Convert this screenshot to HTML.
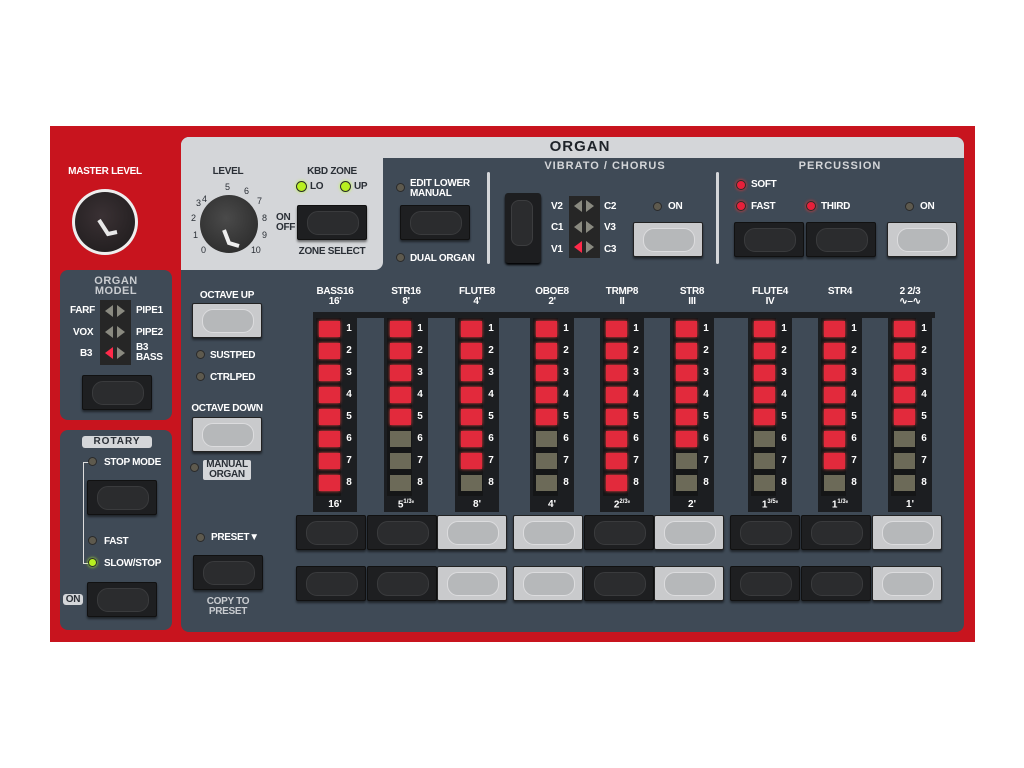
<!DOCTYPE html>
<html><head><meta charset="utf-8">
<style>
*{margin:0;padding:0;box-sizing:border-box}
body{width:1024px;height:768px;background:#fff;position:relative;overflow:hidden;font-family:"Liberation Sans",sans-serif;font-weight:bold;color:#fff}
.a{position:absolute}
.t{position:absolute;font-size:10px;line-height:11px;white-space:nowrap;letter-spacing:-0.3px}
.c{text-align:center}
.dk{color:#2a2f36}
.btn{position:absolute;width:70px;height:35px;border-radius:2px}
.btn.d{background:#1e1f21;border:1px solid #111;box-shadow:0 2px 2px rgba(0,0,0,.5)}
.btn.d::after{content:"";position:absolute;left:9px;top:5px;width:50px;height:22px;border-radius:11px;background:#2b2c2e;border:1px solid #3a3b3d}
.btn.l{background:#c9cacc;border:1px solid #222;box-shadow:0 2px 2px rgba(0,0,0,.5)}
.btn.l::after{content:"";position:absolute;left:9px;top:5px;width:50px;height:22px;border-radius:11px;background:#b6b8ba;border:1px solid #dcdcde}
.led{position:absolute;width:9px;height:9px;border-radius:50%;background:#5e5a4e;border:1px solid #2a2a2a}
.led.r{background:#e8203a;box-shadow:0 0 3px #f33}
.led.g{background:#b8f020;box-shadow:0 0 3px #bf3}
.col{position:absolute;top:313px;width:44px;height:199px;background:#1c1e21}
.col .in{position:absolute;left:3px;top:5px;width:25px;height:178px;background:#151617}
.col i{position:absolute;left:6px;width:21px;height:16px;background:#e22a3c;box-shadow:0 0 3px #f44;font-style:normal}
.col i.o{background:#6c6a58;box-shadow:none}
.col b{position:absolute;left:31px;font-size:10px;width:10px;text-align:center}
.col .bl{position:absolute;left:0;width:44px;top:186px;text-align:center;font-size:10px}
</style></head><body>
<div class="a" style="left:50px;top:126px;width:925px;height:516px;background:#c8141e"></div>
<div class="a" style="left:181px;top:137px;width:783px;height:495px;background:#3f4a56;border-radius:8px"></div>
<div class="a" style="left:181px;top:137px;width:783px;height:21px;background:#d4d6d9;border-radius:8px 8px 0 0"></div>
<div class="a" style="left:181px;top:137px;width:202px;height:133px;background:#d4d6d9;border-radius:8px 0 8px 0"></div>
<div class="t c" style="left:530px;top:139px;width:100px;font-size:15px;line-height:16px;letter-spacing:1px;color:#1e2329">ORGAN</div>
<!-- master level -->
<div class="t c" style="left:60px;top:166px;width:90px">MASTER LEVEL</div>
<div class="a" style="left:72px;top:189px;width:66px;height:66px;border-radius:50%;background:#eee"></div>
<div class="a" style="left:75px;top:192px;width:60px;height:60px;border-radius:50%;background:radial-gradient(circle at 45% 40%,#3a3134,#1d1a1b)"></div>
<svg class="a" style="left:75px;top:192px" width="60" height="60"><path d="M24 28 L33 42 L42 40" stroke="#e8e8e8" stroke-width="4" fill="none"/></svg>
<!-- organ model -->
<div class="a" style="left:60px;top:270px;width:112px;height:150px;background:#3f4a56;border-radius:8px"></div>
<div class="t c" style="left:60px;top:276px;width:112px;color:#c9ccd0;font-size:11px;line-height:10px;letter-spacing:.5px">ORGAN<br>MODEL</div>
<div class="a" style="left:100px;top:300px;width:31px;height:65px;background:#262626"></div>
<svg class="a" style="left:100px;top:300px" width="31" height="65"><g fill="#8a8a80"><path d="M13 5 L5 11 L13 17Z"/><path d="M17 5 L25 11 L17 17Z"/><path d="M13 26 L5 32 L13 38Z"/><path d="M17 26 L25 32 L17 38Z"/><path d="M17 47 L25 53 L17 59Z"/></g><path d="M13 47 L5 53 L13 59Z" fill="#ff2a4a"/></svg>
<div class="t" style="left:70px;top:305px">FARF</div><div class="t" style="left:136px;top:305px">PIPE1</div>
<div class="t" style="left:73px;top:327px">VOX</div><div class="t" style="left:136px;top:327px">PIPE2</div>
<div class="t" style="left:80px;top:348px">B3</div><div class="t" style="left:136px;top:343px;line-height:10px">B3<br>BASS</div>
<div class="btn d" style="left:82px;top:375px"></div>
<!-- rotary -->
<div class="a" style="left:60px;top:430px;width:112px;height:200px;background:#3f4a56;border-radius:8px"></div>
<div class="t c dk" style="left:82px;top:436px;width:70px;height:12px;background:#d4d6d9;border-radius:3px;letter-spacing:1px">ROTARY</div>
<div class="a" style="left:83px;top:462px;width:7px;height:102px;border:1.5px solid #ddd;border-right:none"></div>
<div class="led" style="left:88px;top:457px"></div><div class="t" style="left:104px;top:457px">STOP MODE</div>
<div class="btn d" style="left:87px;top:480px"></div>
<div class="led" style="left:88px;top:536px"></div><div class="t" style="left:104px;top:536px">FAST</div>
<div class="led g" style="left:88px;top:558px"></div><div class="t" style="left:104px;top:558px">SLOW/STOP</div>
<div class="t c dk" style="left:63px;top:594px;width:20px;background:#d4d6d9;border-radius:3px">ON</div>
<div class="btn d" style="left:87px;top:582px"></div>
<!-- level knob -->
<div class="t c dk" style="left:208px;top:166px;width:40px">LEVEL</div>
<div class="t dk" style="left:202px;top:194px;font-size:9px;font-weight:normal">4</div>
<div class="t dk" style="left:225px;top:182px;font-size:9px;font-weight:normal">5</div>
<div class="t dk" style="left:244px;top:186px;font-size:9px;font-weight:normal">6</div>
<div class="t dk" style="left:257px;top:196px;font-size:9px;font-weight:normal">7</div>
<div class="t dk" style="left:262px;top:213px;font-size:9px;font-weight:normal">8</div>
<div class="t dk" style="left:262px;top:230px;font-size:9px;font-weight:normal">9</div>
<div class="t dk" style="left:251px;top:245px;font-size:9px;font-weight:normal">10</div>
<div class="t dk" style="left:196px;top:198px;font-size:9px;font-weight:normal">3</div>
<div class="t dk" style="left:191px;top:213px;font-size:9px;font-weight:normal">2</div>
<div class="t dk" style="left:193px;top:230px;font-size:9px;font-weight:normal">1</div>
<div class="t dk" style="left:201px;top:245px;font-size:9px;font-weight:normal">0</div>
<div class="a" style="left:200px;top:195px;width:58px;height:58px;border-radius:50%;background:radial-gradient(circle at 45% 40%,#4a4a4a,#262626)"></div>
<svg class="a" style="left:200px;top:195px" width="58" height="58"><path d="M24 35 L29 48 L39 51" stroke="#eee" stroke-width="4" fill="none"/></svg>
<!-- kbd zone -->
<div class="t c dk" style="left:296px;top:166px;width:72px">KBD ZONE</div>
<div class="led g" style="left:296px;top:181px;width:11px;height:11px"></div><div class="t dk" style="left:310px;top:181px">LO</div>
<div class="led g" style="left:340px;top:181px;width:11px;height:11px"></div><div class="t dk" style="left:354px;top:181px">UP</div>
<div class="t dk" style="left:276px;top:213px;line-height:10px">ON<br>OFF</div>
<div class="btn d" style="left:297px;top:205px"></div>
<div class="t c dk" style="left:293px;top:246px;width:78px">ZONE SELECT</div>
<!-- edit lower -->
<div class="led" style="left:396px;top:183px"></div>
<div class="t" style="left:410px;top:179px;line-height:10px">EDIT LOWER<br>MANUAL</div>
<div class="btn d" style="left:400px;top:205px"></div>
<div class="led" style="left:396px;top:253px"></div>
<div class="t" style="left:410px;top:253px">DUAL ORGAN</div>
<div class="a" style="left:487px;top:172px;width:3px;height:92px;background:#d4d6d9;border-radius:2px"></div>
<div class="a" style="left:716px;top:172px;width:3px;height:92px;background:#d4d6d9;border-radius:2px"></div>
<!-- vibrato -->
<div class="t c" style="left:520px;top:161px;width:170px;color:#d4d6d9;font-size:11px;letter-spacing:1px">VIBRATO / CHORUS</div>
<div class="a" style="left:505px;top:193px;width:36px;height:70px;background:#1d1e20;border-radius:3px;box-shadow:0 2px 2px #000"></div>
<div class="a" style="left:511px;top:200px;width:22px;height:46px;background:#2b2c2e;border-radius:8px;border:1px solid #3c3d3f"></div>
<div class="a" style="left:569px;top:196px;width:31px;height:62px;background:#262626"></div>
<svg class="a" style="left:569px;top:196px" width="31" height="62"><g fill="#8a8a80"><path d="M13 4 L5 10 L13 16Z"/><path d="M17 4 L25 10 L17 16Z"/><path d="M13 25 L5 31 L13 37Z"/><path d="M17 25 L25 31 L17 37Z"/><path d="M17 45 L25 51 L17 57Z"/></g><path d="M13 45 L5 51 L13 57Z" fill="#ff2a4a"/></svg>
<div class="t" style="left:551px;top:201px">V2</div><div class="t" style="left:604px;top:201px">C2</div>
<div class="t" style="left:551px;top:222px">C1</div><div class="t" style="left:604px;top:222px">V3</div>
<div class="t" style="left:551px;top:244px">V1</div><div class="t" style="left:604px;top:244px">C3</div>
<div class="led" style="left:653px;top:202px"></div><div class="t" style="left:668px;top:201px">ON</div>
<div class="btn l" style="left:633px;top:222px"></div>
<!-- percussion -->
<div class="t c" style="left:760px;top:161px;width:160px;color:#d4d6d9;font-size:11px;letter-spacing:1px">PERCUSSION</div>
<div class="led r" style="left:736px;top:180px;width:10px;height:10px"></div><div class="t" style="left:751px;top:179px">SOFT</div>
<div class="led r" style="left:736px;top:201px;width:10px;height:10px"></div><div class="t" style="left:751px;top:201px">FAST</div>
<div class="led r" style="left:806px;top:201px;width:10px;height:10px"></div><div class="t" style="left:821px;top:201px">THIRD</div>
<div class="led" style="left:905px;top:202px"></div><div class="t" style="left:920px;top:201px">ON</div>
<div class="btn d" style="left:734px;top:222px"></div>
<div class="btn d" style="left:806px;top:222px"></div>
<div class="btn l" style="left:887px;top:222px"></div>
<!-- left column controls -->
<div class="t c" style="left:192px;top:290px;width:70px">OCTAVE UP</div>
<div class="btn l" style="left:192px;top:303px"></div>
<div class="led" style="left:196px;top:350px"></div><div class="t" style="left:210px;top:350px">SUSTPED</div>
<div class="led" style="left:196px;top:372px"></div><div class="t" style="left:210px;top:372px">CTRLPED</div>
<div class="t c" style="left:188px;top:403px;width:78px">OCTAVE DOWN</div>
<div class="btn l" style="left:192px;top:417px"></div>
<div class="led" style="left:190px;top:463px"></div>
<div class="t c dk" style="left:203px;top:460px;width:48px;line-height:10px;background:#d4d6d9;border-radius:2px">MANUAL<br>ORGAN</div>
<div class="led" style="left:196px;top:533px"></div><div class="t" style="left:211px;top:532px">PRESET▼</div>
<div class="btn d" style="left:193px;top:555px"></div>
<div class="t c" style="left:188px;top:597px;width:80px;color:#c9ccd0;line-height:10px">COPY TO<br>PRESET</div>
<!-- drawbar labels -->
<div class="t c" style="left:305px;top:287px;width:60px;line-height:10px">BASS16<br>16'</div>
<div class="t c" style="left:376px;top:287px;width:60px;line-height:10px">STR16<br>8'</div>
<div class="t c" style="left:447px;top:287px;width:60px;line-height:10px">FLUTE8<br>4'</div>
<div class="t c" style="left:522px;top:287px;width:60px;line-height:10px">OBOE8<br>2'</div>
<div class="t c" style="left:592px;top:287px;width:60px;line-height:10px">TRMP8<br>II</div>
<div class="t c" style="left:662px;top:287px;width:60px;line-height:10px">STR8<br>III</div>
<div class="t c" style="left:740px;top:287px;width:60px;line-height:10px">FLUTE4<br>IV</div>
<div class="t c" style="left:810px;top:287px;width:60px;line-height:10px">STR4</div>
<div class="t c" style="left:880px;top:287px;width:60px;line-height:10px">2 2/3<br>∿–∿</div>
<div class="a" style="left:313px;top:312px;width:622px;height:6px;background:#1c1e21"></div>
<!-- columns -->
<div class="col" style="left:313px"><div class="in"></div><i style="top:8px"></i><i style="top:30px"></i><i style="top:52px"></i><i style="top:74px"></i><i style="top:96px"></i><i style="top:118px"></i><i style="top:140px"></i><i style="top:162px"></i><b style="top:10px">1</b><b style="top:32px">2</b><b style="top:54px">3</b><b style="top:76px">4</b><b style="top:98px">5</b><b style="top:120px">6</b><b style="top:142px">7</b><b style="top:164px">8</b><div class="bl">16'</div></div>
<div class="col" style="left:384px"><div class="in"></div><i style="top:8px"></i><i style="top:30px"></i><i style="top:52px"></i><i style="top:74px"></i><i style="top:96px"></i><i class="o" style="top:118px"></i><i class="o" style="top:140px"></i><i class="o" style="top:162px"></i><b style="top:10px">1</b><b style="top:32px">2</b><b style="top:54px">3</b><b style="top:76px">4</b><b style="top:98px">5</b><b style="top:120px">6</b><b style="top:142px">7</b><b style="top:164px">8</b><div class="bl">5<sup style="font-size:6px">1/3</sup>'</div></div>
<div class="col" style="left:455px"><div class="in"></div><i style="top:8px"></i><i style="top:30px"></i><i style="top:52px"></i><i style="top:74px"></i><i style="top:96px"></i><i style="top:118px"></i><i style="top:140px"></i><i class="o" style="top:162px"></i><b style="top:10px">1</b><b style="top:32px">2</b><b style="top:54px">3</b><b style="top:76px">4</b><b style="top:98px">5</b><b style="top:120px">6</b><b style="top:142px">7</b><b style="top:164px">8</b><div class="bl">8'</div></div>
<div class="col" style="left:530px"><div class="in"></div><i style="top:8px"></i><i style="top:30px"></i><i style="top:52px"></i><i style="top:74px"></i><i style="top:96px"></i><i class="o" style="top:118px"></i><i class="o" style="top:140px"></i><i class="o" style="top:162px"></i><b style="top:10px">1</b><b style="top:32px">2</b><b style="top:54px">3</b><b style="top:76px">4</b><b style="top:98px">5</b><b style="top:120px">6</b><b style="top:142px">7</b><b style="top:164px">8</b><div class="bl">4'</div></div>
<div class="col" style="left:600px"><div class="in"></div><i style="top:8px"></i><i style="top:30px"></i><i style="top:52px"></i><i style="top:74px"></i><i style="top:96px"></i><i style="top:118px"></i><i style="top:140px"></i><i style="top:162px"></i><b style="top:10px">1</b><b style="top:32px">2</b><b style="top:54px">3</b><b style="top:76px">4</b><b style="top:98px">5</b><b style="top:120px">6</b><b style="top:142px">7</b><b style="top:164px">8</b><div class="bl">2<sup style="font-size:6px">2/3</sup>'</div></div>
<div class="col" style="left:670px"><div class="in"></div><i style="top:8px"></i><i style="top:30px"></i><i style="top:52px"></i><i style="top:74px"></i><i style="top:96px"></i><i style="top:118px"></i><i class="o" style="top:140px"></i><i class="o" style="top:162px"></i><b style="top:10px">1</b><b style="top:32px">2</b><b style="top:54px">3</b><b style="top:76px">4</b><b style="top:98px">5</b><b style="top:120px">6</b><b style="top:142px">7</b><b style="top:164px">8</b><div class="bl">2'</div></div>
<div class="col" style="left:748px"><div class="in"></div><i style="top:8px"></i><i style="top:30px"></i><i style="top:52px"></i><i style="top:74px"></i><i style="top:96px"></i><i class="o" style="top:118px"></i><i class="o" style="top:140px"></i><i class="o" style="top:162px"></i><b style="top:10px">1</b><b style="top:32px">2</b><b style="top:54px">3</b><b style="top:76px">4</b><b style="top:98px">5</b><b style="top:120px">6</b><b style="top:142px">7</b><b style="top:164px">8</b><div class="bl">1<sup style="font-size:6px">3/5</sup>'</div></div>
<div class="col" style="left:818px"><div class="in"></div><i style="top:8px"></i><i style="top:30px"></i><i style="top:52px"></i><i style="top:74px"></i><i style="top:96px"></i><i style="top:118px"></i><i style="top:140px"></i><i class="o" style="top:162px"></i><b style="top:10px">1</b><b style="top:32px">2</b><b style="top:54px">3</b><b style="top:76px">4</b><b style="top:98px">5</b><b style="top:120px">6</b><b style="top:142px">7</b><b style="top:164px">8</b><div class="bl">1<sup style="font-size:6px">1/3</sup>'</div></div>
<div class="col" style="left:888px"><div class="in"></div><i style="top:8px"></i><i style="top:30px"></i><i style="top:52px"></i><i style="top:74px"></i><i style="top:96px"></i><i class="o" style="top:118px"></i><i class="o" style="top:140px"></i><i class="o" style="top:162px"></i><b style="top:10px">1</b><b style="top:32px">2</b><b style="top:54px">3</b><b style="top:76px">4</b><b style="top:98px">5</b><b style="top:120px">6</b><b style="top:142px">7</b><b style="top:164px">8</b><div class="bl">1'</div></div>
<!-- button rows -->
<div class="btn d" style="left:296px;top:515px"></div><div class="btn d" style="left:367px;top:515px"></div><div class="btn l" style="left:437px;top:515px"></div><div class="btn l" style="left:513px;top:515px"></div><div class="btn d" style="left:584px;top:515px"></div><div class="btn l" style="left:654px;top:515px"></div><div class="btn d" style="left:730px;top:515px"></div><div class="btn d" style="left:801px;top:515px"></div><div class="btn l" style="left:872px;top:515px"></div>
<div class="btn d" style="left:296px;top:566px"></div><div class="btn d" style="left:367px;top:566px"></div><div class="btn l" style="left:437px;top:566px"></div><div class="btn l" style="left:513px;top:566px"></div><div class="btn d" style="left:584px;top:566px"></div><div class="btn l" style="left:654px;top:566px"></div><div class="btn d" style="left:730px;top:566px"></div><div class="btn d" style="left:801px;top:566px"></div><div class="btn l" style="left:872px;top:566px"></div>
</body></html>
